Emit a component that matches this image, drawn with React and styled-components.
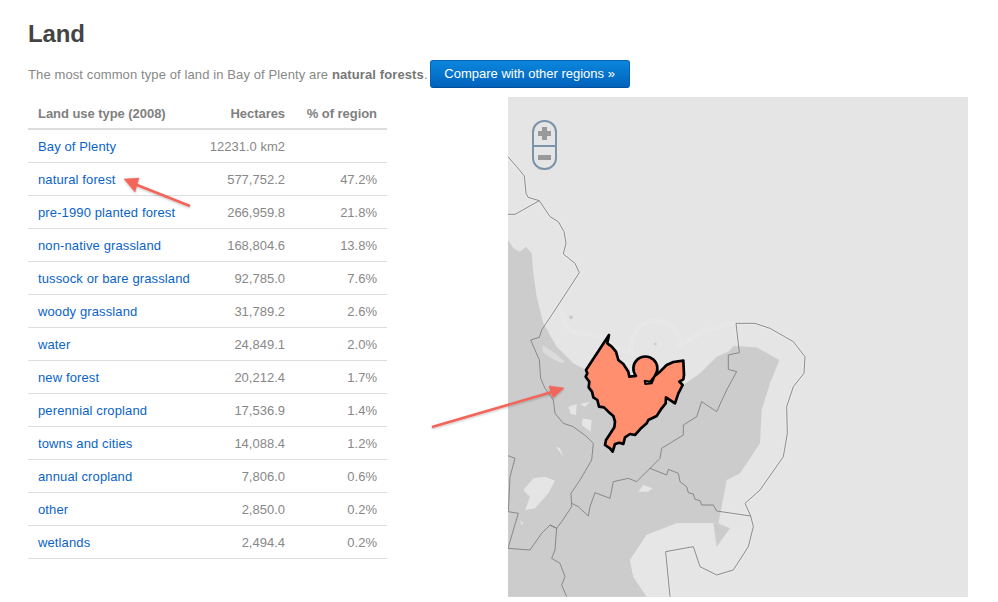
import React from 'react';
import styled, { createGlobalStyle } from 'styled-components';

const GlobalStyle = createGlobalStyle`
  html, body {
    margin: 0;
    padding: 0;
    background: #fff;
    overflow: hidden;
  }
  body {
    font-family: "Liberation Sans", Arial, sans-serif;
    font-size: 13px;
    color: #888;
  }
`

const Page = styled.div`
  position: relative;
  width: 998px;
  height: 602px;
  box-sizing: border-box;
  padding: 19px 30px 0 28px;
  overflow: hidden;
`

const Title = styled.h2`
  margin: 0;
  font-size: 24px;
  line-height: 29px;
  font-weight: bold;
  letter-spacing: -0.1px;
  color: #444;
`

const Intro = styled.div`
  display: flex;
  align-items: center;
  height: 28px;
  margin-top: 12px;
  gap: 2px;

  p { margin: 0; letter-spacing: 0.11px; }
  strong { color: #777; }
`

const CompareButton = styled.a`
  display: block;
  box-sizing: border-box;
  width: 200px;
  height: 28px;
  line-height: 26px;
  text-align: center;
  color: #fff;
  font-size: 13px;
  border-radius: 3px;
  border: 1px solid #0a62b0;
  border-bottom-color: #00509c;
  background: linear-gradient(#0b86dc, #0062bd);
`

const Content = styled.div`
  display: flex;
  justify-content: space-between;
  margin-top: 9px;
`

const Table = styled.table`
  width: 359px;
  height: fit-content;
  border-collapse: separate;
  border-spacing: 0;
  table-layout: fixed;
`

const Th = styled.th`
  box-sizing: border-box;
  height: 33px;
  padding: 2px 10px 0 ${p => (p.$left ? '10px' : '0')};
  font-size: 13px;
  letter-spacing: -0.05px;
  color: #808080;
  font-weight: bold;
  text-align: ${p => (p.$left ? 'left' : 'right')};
  width: ${p => p.$w}px;
  border-bottom: 2px solid #ddd;
`

const Td = styled.td`
  box-sizing: border-box;
  height: 33px;
  padding: 0 10px 0 ${p => (p.$left ? '10px' : '0')};
  text-align: ${p => (p.$left ? 'left' : 'right')};
  border-bottom: 1px solid #ddd;
  white-space: nowrap;
`

const RegionLink = styled.a`
  color: #0a64c8;
  letter-spacing: 0.12px;
`

const MapFrame = styled.div`
  position: relative;
  width: 460px;
  height: 500px;
  background: #e5e5e5;
  overflow: hidden;

  svg { display: block; }
`

const ZoomControl = styled.div`
  position: absolute;
  left: 24px;
  top: 23px;
  width: 25px;
  height: 50px;
  box-sizing: border-box;
  border: 2px solid #7c94aa;
  border-radius: 12px;
  display: grid;
  grid-template-rows: 1fr 1fr;
`

const ZoomPart = styled.div`
  position: relative;
  border-top: ${p => (p.$minus ? '2px solid #7c94aa' : 'none')};

  &:before, &:after {
    content: "";
    position: absolute;
    background: #999;
  }
  &:before {
    left: 4px;
    top: ${p => (p.$minus ? '8px' : '9px')};
    width: 13px;
    height: 5px;
  }
  &:after {
    display: ${p => (p.$minus ? 'none' : 'block')};
    left: 8px;
    top: 5px;
    width: 5px;
    height: 13px;
  }
`

const ArrowLayer = styled.svg`
  position: absolute;
  left: 0;
  top: 0;
  pointer-events: none;
`

const rows = [
  ['Bay of Plenty', '12231.0 km2', ''],
  ['natural forest', '577,752.2', '47.2%'],
  ['pre-1990 planted forest', '266,959.8', '21.8%'],
  ['non-native grassland', '168,804.6', '13.8%'],
  ['tussock or bare grassland', '92,785.0', '7.6%'],
  ['woody grassland', '31,789.2', '2.6%'],
  ['water', '24,849.1', '2.0%'],
  ['new forest', '20,212.4', '1.7%'],
  ['perennial cropland', '17,536.9', '1.4%'],
  ['towns and cities', '14,088.4', '1.2%'],
  ['annual cropland', '7,806.0', '0.6%'],
  ['other', '2,850.0', '0.2%'],
  ['wetlands', '2,494.4', '0.2%'],
]

const LAND = 'M24 -210 L40 -185 L60 -175 L78 -190 L95 -170 L100 -110 L110 -40 L130 40 L170 110 L220 160 L258 180 L400 230 L550 225 L600 190 L650 140 L685 125 L700 108 L770 112 L838 150 L810 220 L785 300 L780 400 L720 490 L680 510 L665 590 L655 640 L690 655 L650 710 L640 640 L530 640 L440 675 L390 750 L400 800 L440 860 L24 860 Z'

const BAY = 'M497 725 L580 710 L600 770 L650 795 L700 780 L745 710 L760 650 L690 655 L640 640 L530 640 L440 675 L390 750 L400 800 L440 860 L497 860 Z'

const PATCHES = [
  'M70 540 L100 505 L135 500 L165 512 L145 550 L105 595 L75 600 L90 560 Z',
  'M205 290 L230 282 L228 315 L212 312 Z',
  'M240 282 L270 275 L255 290 Z',
  'M248 325 L275 330 L272 365 L245 345 Z',
  'M168 410 L180 415 L190 442 Z',
  'M415 545 L430 525 L458 535 L445 545 Z',
  'M60 630 L70 640 L65 645 Z',
]

const SPECKLES = 'M128 105 L145 118 L165 130 L195 155 L185 160 L160 148 L140 135 L128 125 Z'

const BORDERS = [
  'M24 -460 L50 -430 L73 -402 L78 -350 L84 -338 L118 -328 L150 -280 L175 -265 L192 -235 L198 -200 L190 -168 L225 -140 L238 -112 L165 0 L125 60 L118 82 L92 90 L105 120 L118 150 L122 205 L135 235 L160 270 L165 310 L190 340 L220 350 L260 380 L280 400 L275 450 L240 510 L213 550 L215 590 L185 635 L170 655 L150 645 L125 670 L90 720 L24 715',
  'M24 -287 L45 -287 L118 -328',
  'M215 580 L235 590 L265 618 L270 590 L285 548 L330 565 L340 515 L385 505 L410 515 L450 475 L480 445 L485 415 L550 375 L550 345 L590 320 L605 275 L650 305 L680 240 L710 185 L685 178 L685 135 L718 128 L708 40 L765 40 L810 55 L880 95 L915 140 L912 190 L880 230 L860 290 L862 370 L850 440 L780 540 L735 580 L752 618 L760 650 L745 710 L700 780 L650 795 L600 770 L580 710 L497 725 L510 860',
  'M450 475 L500 495 L505 478 L535 490 L540 515 L560 530 L565 548 L580 552 L585 568 L600 572 L605 585 L640 585 L650 603 L752 618',
  'M150 645 L170 655 L165 720 L155 745 L180 760 L195 800 L185 825 L200 860',
  'M24 437 L45 445 L30 500 L25 605 L55 610 L40 660 L24 715',
]

const COAST = 'M182 -20 C185 30 195 55 230 70 C270 68 320 80 345 115 L395 130 C385 80 415 35 465 32 C515 35 545 70 538 105 C580 85 630 45 705 40'

const REGION = 'M327 75 L322 100 L335 110 L348 125 L355 150 L370 162 L385 185 L388 200 L408 198 A36 36 0 1 1 465 197 L480 185 L500 165 L520 156 L550 152 L552 195 L550 208 L538 215 L548 225 L535 250 L525 280 L498 262 L497 280 L485 295 L470 318 L445 330 L440 340 L420 358 L405 375 L390 372 L375 382 L370 402 L358 398 L345 402 L338 425 L330 415 L315 405 L318 390 L330 372 L343 352 L345 335 L340 318 L325 305 L312 292 L297 290 L292 270 L280 262 L276 245 L266 232 L268 215 L257 200 L262 190 L258 180 Z'

// map is drawn in the same units as a 3x crop, so 3 units is one pixel
const MapDrawing = () => (
  <svg width="460" height="500" viewBox="24 -639 1380 1500">
    {BORDERS.map(d => (
      <path key={d} d={d} fill="none" stroke="#eaeaea" strokeWidth="9" />
    ))}
    <path d={COAST} fill="none" stroke="#e9e9e9" strokeWidth="11" />
    <path d={LAND} fill="#ccc" />
    <path d={BAY} fill="#e6e6e6" />
    <path d="M640 640 L690 655 L650 710 Z" fill="#ccc" />
    {PATCHES.map(d => <path key={d} d={d} fill="#e5e5e5" />)}
    <path d={SPECKLES} fill="#dcdcdc" />
    <path d={COAST} fill="none" stroke="#dde3e6" strokeWidth="2.5" strokeDasharray="30 6" />
    <circle cx="466" cy="102" r="4" fill="#ccc" />
    <circle cx="213" cy="22" r="6" fill="#ccc" />
    {BORDERS.map(d => (
      <path key={d} d={d} fill="none" stroke="#808080" strokeWidth="2.7" />
    ))}
    <path d={REGION} fill="#ff8f6e" stroke="#000" strokeWidth="8" strokeLinejoin="round" />
    <path d="M465 197 L455 220 L436 222 L434 212 L450 215 Z" fill="#e5e5e5" stroke="#000" strokeWidth="6" strokeLinejoin="round" />
  </svg>
)

const Arrows = () => (
  <ArrowLayer width="998" height="602" viewBox="0 0 998 602">
    <defs>
      <filter id="arrowShadow" x="-10%" y="-10%" width="120%" height="130%">
        <feDropShadow dx="0" dy="1" stdDeviation="1" floodColor="#000" floodOpacity="0.25" />
      </filter>
    </defs>
    <g filter="url(#arrowShadow)" fill="#f2655a" stroke="#f2655a">
      <line x1="190" y1="206" x2="132" y2="183" strokeWidth="2.5" />
      <polygon points="124,179 139,178 135,192" strokeWidth="0.5" />
      <line x1="432" y1="427" x2="552" y2="392" strokeWidth="2.5" />
      <polygon points="564,388 549,386 553,398" strokeWidth="0.5" />
    </g>
  </ArrowLayer>
)

export default function App() {
  return (
    <Page>
      <GlobalStyle />
      <Title>Land</Title>
      <Intro>
        <p>The most common type of land in Bay of Plenty are <strong>natural forests</strong>.</p>
        <CompareButton>Compare with other regions »</CompareButton>
      </Intro>
      <Content>
        <Table>
          <thead>
            <tr>
              <Th $left $w={175}>Land use type (2008)</Th>
              <Th $w={92}>Hectares</Th>
              <Th $w={92}>% of region</Th>
            </tr>
          </thead>
          <tbody>
            {rows.map(([name, hectares, percent]) => (
              <tr key={name}>
                <Td $left><RegionLink>{name}</RegionLink></Td>
                <Td>{hectares}</Td>
                <Td>{percent}</Td>
              </tr>
            ))}
          </tbody>
        </Table>
        <MapFrame>
          <MapDrawing />
          <ZoomControl>
            <ZoomPart />
            <ZoomPart $minus />
          </ZoomControl>
        </MapFrame>
      </Content>
      <Arrows />
    </Page>
  )
}
